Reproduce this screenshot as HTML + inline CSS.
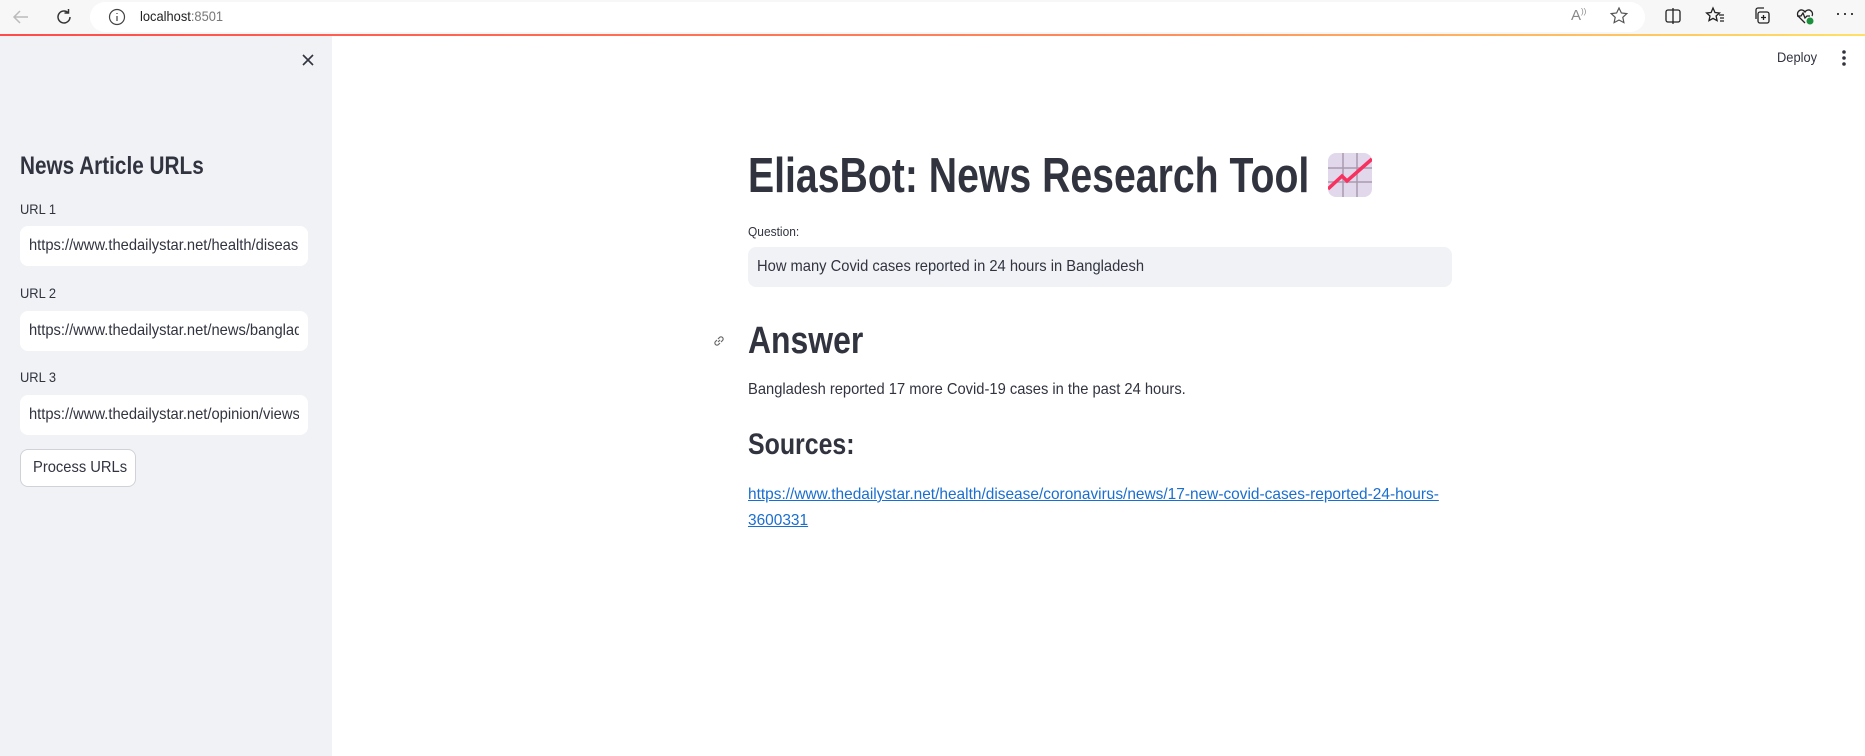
<!DOCTYPE html>
<html><head><meta charset="utf-8"><style>
*{box-sizing:border-box;margin:0;padding:0}
body{width:1865px;height:756px;overflow:hidden;font-family:"Liberation Sans",sans-serif;color:#31333f;background:#fff;position:relative}
.a{position:absolute;white-space:nowrap}
.n{display:inline-block;transform:scaleX(.92);transform-origin:0 50%}
.b{transform:scaleX(.83)}
#tb{position:absolute;left:0;top:0;width:1865px;height:34px;background:#f7f7f7}
#addr{position:absolute;left:90px;top:2px;width:1555px;height:30px;background:#fff;border-radius:15px}
#line{position:absolute;left:0;top:34px;width:1865px;height:2px;background:linear-gradient(90deg,#ff4b4b,#ff8a5b 60%,#ffe066)}
#side{position:absolute;left:0;top:36px;width:332px;height:720px;background:#f0f2f6}
.inp{position:absolute;left:20px;width:288px;height:40px;background:#fff;border-radius:8px;font-size:16px;line-height:40px;padding-left:9px;color:#31333f}
.inp div{width:270px;overflow:hidden;white-space:nowrap}
.lbl{font-size:14px;color:#31333f}
</style></head><body>
<div id="tb"></div>
<div id="addr"></div>
<svg class="a" style="left:10px;top:6px" width="22" height="22" viewBox="0 0 22 22" fill="none" stroke="#bbb" stroke-width="1.5"><path d="M18 11H4M10 5l-6 6 6 6"/></svg>
<svg class="a" style="left:53px;top:6px" width="22" height="22" viewBox="0 0 22 22" fill="none" stroke="#333" stroke-width="1.5"><path d="M17 11a6 6 0 1 1-2-4.5"/><path d="M15.5 3v4h-4"/></svg>
<svg class="a" style="left:107px;top:7px" width="20" height="20" viewBox="0 0 20 20" fill="none" stroke="#444" stroke-width="1.2"><circle cx="10" cy="10" r="7.5"/><path d="M10 9v5M10 6v1"/></svg>
<div class="a" style="left:140px;top:8px;font-size:14px;color:#222"><span class="n">localhost<span style="color:#777">:8501</span></span></div>
<div class="a" style="left:1571px;top:7px;font-size:15px;color:#888">A<sup style="font-size:8px">))</sup></div>
<svg class="a" style="left:1608px;top:5px" width="22" height="22" viewBox="0 0 22 22" fill="none" stroke="#555" stroke-width="1.2"><path d="M11 3l2.4 5 5.4.6-4 3.7 1.1 5.3L11 15l-4.9 2.6 1.1-5.3-4-3.7 5.4-.6z"/></svg>
<svg class="a" style="left:1662px;top:5px" width="22" height="22" viewBox="0 0 22 22" fill="none" stroke="#222" stroke-width="1.3"><rect x="4" y="5" width="14" height="12" rx="2"/><path d="M11 3v16"/></svg>
<svg class="a" style="left:1704px;top:5px" width="22" height="22" viewBox="0 0 22 22" fill="none" stroke="#222" stroke-width="1.3"><path d="M9 3l2 4.5 4.5.5-3.4 3 1 4.6L9 13.4l-4 2.2 1-4.6-3.4-3 4.5-.5z"/><path d="M15 10h5M16 13h4M16 16h4"/></svg>
<svg class="a" style="left:1750px;top:5px" width="22" height="22" viewBox="0 0 22 22" fill="none" stroke="#222" stroke-width="1.3"><path d="M6 14V5a2 2 0 0 1 2-2h6"/><rect x="8" y="7" width="11" height="11" rx="2"/><path d="M13.5 10v5M11 12.5h5"/></svg>
<svg class="a" style="left:1794px;top:5px" width="22" height="22" viewBox="0 0 22 22" fill="none" stroke="#222" stroke-width="1.3"><path d="M11 18l-7-7a4 4 0 0 1 7-4 4 4 0 0 1 7 4"/><path d="M3 11h4l2-3 2 5 2-2h3"/><circle cx="16" cy="16" r="3.5" fill="#1a8f3c" stroke="none"/></svg>
<div class="a" style="left:1835px;top:3px;font-size:18px;color:#222;letter-spacing:1px">···</div>
<div id="line"></div>
<div id="side"></div>
<svg class="a" style="left:300px;top:52px" width="16" height="16" viewBox="0 0 16 16" stroke="#31333f" stroke-width="1.6"><path d="M3 3l10 10M13 3L3 13"/></svg>
<div class="a" style="left:20px;top:152px;font-size:25px;font-weight:600"><span class="n b">News Article URLs</span></div>
<div class="a lbl" style="left:20px;top:201px"><span class="n">URL 1</span></div>
<div class="inp" style="top:226px"><div><span class="n">https://www.thedailystar.net/health/disease</span></div></div>
<div class="a lbl" style="left:20px;top:285px"><span class="n">URL 2</span></div>
<div class="inp" style="top:311px"><div><span class="n">https://www.thedailystar.net/news/banglades</span></div></div>
<div class="a lbl" style="left:20px;top:369px"><span class="n">URL 3</span></div>
<div class="inp" style="top:395px"><div><span class="n">https://www.thedailystar.net/opinion/views</span></div></div>
<div class="a" style="left:20px;top:449px;width:116px;height:38px;border:1px solid #d0d2d8;border-radius:8px;background:#fff;font-size:16px;line-height:36px;padding-left:12px"><span class="n">Process URLs</span></div>
<div class="a" style="left:1777px;top:49px;font-size:14px"><span class="n">Deploy</span></div>
<svg class="a" style="left:1838px;top:48px" width="12" height="20" viewBox="0 0 12 20" fill="#31333f"><circle cx="6" cy="4" r="1.8"/><circle cx="6" cy="10" r="1.8"/><circle cx="6" cy="16" r="1.8"/></svg>
<div class="a" style="left:748px;top:146px;font-size:49px;font-weight:bold;line-height:60px"><span class="n" style="transform:scaleX(.8)">EliasBot: News Research Tool</span></div>
<svg class="a" style="left:1328px;top:153px" width="44" height="44" viewBox="0 0 44 44"><rect width="44" height="44" rx="8" fill="#e1d8ec"/><path d="M15 0v44M29 0v44M0 15h44M0 29h44" stroke="#a99bb0" stroke-width="1.5"/><path d="M0 36l14-13 5 5L44 6" stroke="#f8315e" stroke-width="3.5" fill="none"/></svg>
<div class="a" style="left:748px;top:224px;font-size:13px"><span class="n">Question:</span></div>
<div class="a" style="left:748px;top:247px;width:704px;height:40px;background:#f0f2f6;border-radius:8px;font-size:16px;line-height:40px;padding-left:9px"><span class="n">How many Covid cases reported in 24 hours in Bangladesh</span></div>
<svg class="a" style="left:711px;top:333px" width="16" height="16" viewBox="0 0 16 16" fill="none" stroke="#666" stroke-width="1.2"><path d="M7 9l2-2M6 7L4.5 8.5a2.1 2.1 0 0 0 3 3L9 10M10 9l1.5-1.5a2.1 2.1 0 0 0-3-3L7 6"/></svg>
<div class="a" style="left:748px;top:318px;font-size:38px;font-weight:600;line-height:46px"><span class="n" style="transform:scaleX(.84)">Answer</span></div>
<div class="a" style="left:748px;top:381px;font-size:16px"><span class="n">Bangladesh reported 17 more Covid-19 cases in the past 24 hours.</span></div>
<div class="a" style="left:748px;top:427px;font-size:30px;font-weight:600;line-height:36px"><span class="n b">Sources:</span></div>
<div class="a" style="left:748px;top:482px;font-size:16px;color:#1a6ecf;line-height:26px"><span class="n" style="transform:scaleX(.965);text-decoration:underline">https://www.thedailystar.net/health/disease/coronavirus/news/17-new-covid-cases-reported-24-hours-</span><br><span class="n" style="transform:scaleX(.965);text-decoration:underline">3600331</span></div>
</body></html>
